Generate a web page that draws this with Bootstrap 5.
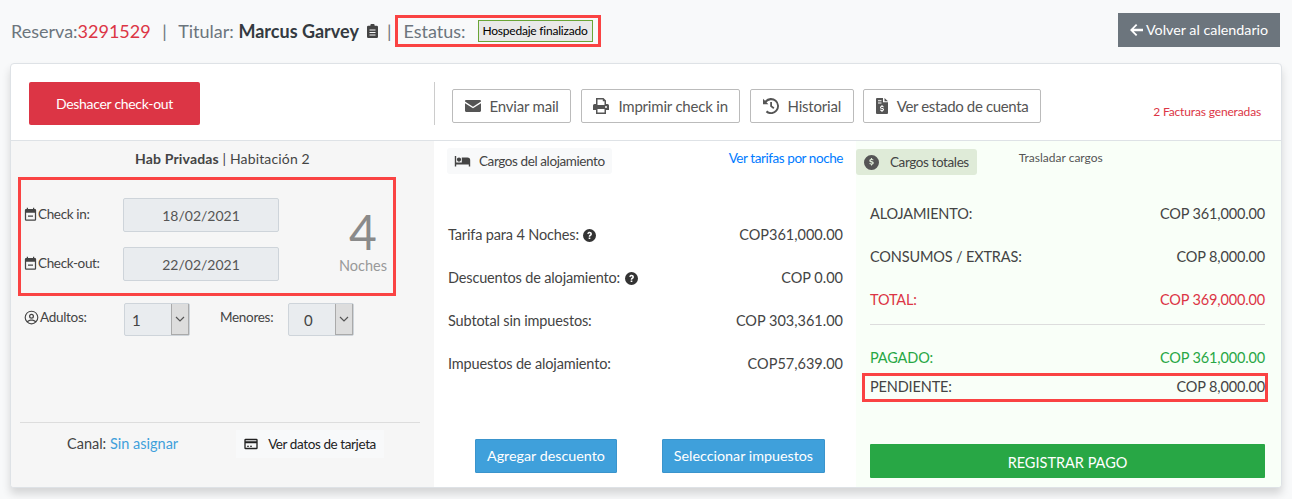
<!DOCTYPE html>
<html lang="es">
<head>
<meta charset="utf-8">
<title>Reserva</title>
<link href="https://cdn.jsdelivr.net/npm/bootstrap@5.3.0/dist/css/bootstrap.min.css" rel="stylesheet">
<style>
html,body{height:499px;overflow:hidden}
body{background:#f8f9fa;font-family:Lato,"Liberation Sans",sans-serif;font-size:14px;color:#444;padding:0 10px}
svg{fill:currentColor;flex:none}
.top-bar{height:63px;padding-top:13px}
.resumen{font-size:18px;color:#6c757d;height:36px;line-height:36px;white-space:nowrap;margin-left:1px}
.resumen b{color:#343a40;font-weight:700}
.rojo{color:#dc3545}
.sep{margin:0 11.5px;color:#6c757d}
.sep-b{margin:0 7px 0 9px;color:#6c757d}
.icono-clip{color:#444}
.caja-marca{border:3px solid #fa4343}
.caja-estatus{padding:0 5px;height:32px;display:flex;align-items:center;gap:12px;line-height:1;margin-top:-1px;margin-left:-3px}
.etiqueta-estado{background:#e9e9e9;border:1px solid #6aa536;color:#000;font-size:12px;padding:3px 4px;line-height:14px;height:22px;letter-spacing:-.22px}
.btn-volver{background:#6c757d;color:#fff;border-radius:0;font-size:14.3px;padding:0 11px;height:34px;width:162px;border:0;line-height:34px;white-space:nowrap;margin-right:2px}
.btn-volver:hover{background:#6c757d;color:#fff}
.btn-volver svg{vertical-align:-1px}
.ficha{width:1272px;height:425px;border:1px solid #dee2e6;border-radius:4px;background:#fff;box-shadow:0 6px 8px rgba(0,0,0,.14);overflow:hidden}
.cabecera{height:77px;border-bottom:1px solid #dee2e6;padding:18px 0 0 18px}
.btn-deshacer{background:#dc3545;color:#fff;width:171px;height:43px;font-size:14px;letter-spacing:-.3px;border-radius:2px;border:0;margin-right:234px;padding:0}
.btn-deshacer:hover{background:#dc3545;color:#fff}
.vline{width:1px;height:43px;background:#ccc;margin-right:17px}
.acciones{margin-top:7px;gap:9.7px}
.btn-accion{background:#fff;border:1px solid #bbb;border-radius:2px;color:#555;font-size:15px;letter-spacing:-.2px;height:34px;padding:0 11.5px;display:flex;align-items:center;gap:9px;white-space:nowrap}
.btn-accion.ajustado{letter-spacing:-.35px}
.facturas{color:#dc3545;font-size:12px;letter-spacing:-.15px;margin:21px 0 0 auto;padding-right:20px}
.cuerpo{height:346px}
.col-izq{width:423px;background:#f6f6f6;padding:9px 14px 0 7px;display:flex;flex-direction:column}
.col-med{width:422px;padding:7px 13px 0 14px;display:flex;flex-direction:column}
.col-der{width:425px;background:#f9fff8;padding:8px 16px 0 14px;display:flex;flex-direction:column}
.titulo-hab{text-align:center;font-size:14px;line-height:17px;margin-left:7px;letter-spacing:.15px}
.caja-fechas{width:378px;height:119px;padding:18px 0 0 2px;margin-top:10px;position:relative}
.fila-fecha{display:flex;align-items:center;height:34px;margin-bottom:15px;font-size:13.5px;letter-spacing:-.35px;color:#444}
.fila-fecha .lbl{width:100px;display:flex;align-items:center;margin-top:-1px}
.campo{width:156px;height:34px;background:#e9ecef;border:1px solid #ced4da;color:#555;display:flex;align-items:center;justify-content:center;border-radius:2px;font-size:14px;letter-spacing:0}
.noches{position:absolute;right:5px;top:27px;text-align:center;color:#8a8a8a;width:50px}
.noches .num{font-size:48px;line-height:49px}
.noches .txt{font-size:14.5px;line-height:20px;color:#999}
.fila-sel{display:flex;align-items:center;margin-top:7px;padding-left:6px;height:33px;font-size:13.5px;letter-spacing:-.3px}
.fila-sel .lbl{width:100px;display:flex;align-items:center;gap:1px;margin-top:-5px}
.lbl-menores{margin-left:30px;width:68px;margin-top:-5px}
.sel{width:66px;height:33px;background:#e9ecef;border:1px solid #ced4da;border-radius:2px;display:flex;font-size:15px;letter-spacing:0;color:#444}
.sel .v{flex:1;padding-top:5px;padding-left:7px}
.sel .v.v2{padding-left:15px}
.sel .f{width:18px;background:#ddd;border-left:1px solid #aaa;border-right:1px solid #aaa;border-bottom:1px solid #aaa;display:flex;align-items:center;justify-content:center;color:#555}
.linea{border-top:1px solid #ddd;margin:86px 0 0 2px;height:1px;width:400px}
.pie-izq{display:flex;align-items:center;margin-top:7px;padding-left:49px;font-size:14.5px}
.azul{color:#3fa0db;text-decoration:none}
.ver-tarjeta{background:#f8f9fa;padding:0 8px 0 7px;height:28px;display:flex;align-items:center;gap:9px;color:#222;margin-left:58px;font-size:13.5px;letter-spacing:-.4px;white-space:nowrap}
.chip{display:inline-flex;align-items:center;height:26px;border-radius:3px;padding:0 7px;font-size:13.5px;letter-spacing:-.4px;white-space:nowrap}
.chip-gris{background:#f8f9fa;color:#444;gap:8px;margin-left:-1px}
.chip-verde{background:#dfebd8;color:#444;gap:11px;margin-left:-14px;padding:0 8px 0 8px}
.chip-verde svg{color:#555}
.enlace-tarifas{color:#007bff;text-decoration:none;font-size:13.5px;letter-spacing:-.43px}
.trasladar{font-size:12px;color:#555;margin-left:42px}
.fila-monto{display:flex;justify-content:space-between;align-items:center;font-size:14.5px;color:#444;height:20px}
.col-med .fila-monto span:first-child{letter-spacing:-.15px}
.col-der .fila-monto{letter-spacing:-.15px}
.fila-monto.rojo{color:#dc3545}
.fila-monto.verde{color:#28a745}
.ayuda{display:inline-block;vertical-align:-2px;margin-left:1px;color:#333}
.bloque-med{margin-top:51px;display:flex;flex-direction:column;gap:23px}
.bloque-der{margin-top:29px;display:flex;flex-direction:column;gap:23px}
.sep-der{border-top:1px solid #ddd;height:1px;margin:14px 0 23px}
.caja-pend{margin:5px -3px 0 -8px;padding:0 0 1px 5px;height:29px}
.botones-med{margin-top:auto;padding-bottom:14px;display:flex;gap:45px;padding-left:27px}
.btn-azul{background:#3fa0db;border:1px solid #3a94cc;color:#fff;font-size:14.3px;border-radius:1px;height:34px;padding:0 11px;white-space:nowrap}
.btn-azul:hover{background:#3fa0db;color:#fff}
.btn-pago{background:#28a745;color:#fff;border:0;border-radius:1px;height:34px;width:395px;font-size:14.5px;margin-top:auto;margin-bottom:9px;padding:3px 0 0}
.btn-pago:hover{background:#28a745;color:#fff}
</style>
</head>
<body>
<div class="top-bar d-flex justify-content-between align-items-start">
  <div class="resumen d-flex align-items-center">
    <span>Reserva:<span class="rojo">3291529</span></span><span class="sep">|</span>
    <span>Titular: <b>Marcus Garvey</b></span>
    <svg class="ms-2 icono-clip" width="11" height="14" viewBox="0 0 11 14"><path d="M1.2 1.8H3.4V1A1 1 0 0 1 4.4 0h2.2a1 1 0 0 1 1 1v.8h2.2a1.2 1.2 0 0 1 1.2 1.2v9.800a1.2 1.2 0 0 1-1.200 1.200H1.200A1.200 1.200 0 0 1 0 12.800V3a1.200 1.200 0 0 1 1.200-1.200zM2.500 5.500v1h6v-1zm0 2.500v1h6V8zm0 2.500v1h6v-1z" fill-rule="evenodd"/></svg>
    <span class="sep-b">|</span>
    <div class="caja-marca caja-estatus"><span>Estatus:</span><span class="etiqueta-estado">Hospedaje finalizado</span></div>
  </div>
  <a class="btn btn-volver" href="#"><svg width="13" height="12" viewBox="0 0 13 12"><path d="M6 0l1.300 1.300L3.700 4.800H13v2.400H3.700l3.600 3.500L6 12 0 6z"/></svg> Volver al calendario</a>
</div>
<div class="ficha">
  <div class="cabecera d-flex align-items-start">
    <button class="btn btn-deshacer">Deshacer check-out</button>
    <div class="vline"></div>
    <div class="acciones d-flex">
      <button class="btn btn-accion"><svg width="16" height="12" viewBox="0 0 16 12"><path d="M1.200 0h13.600c.6 0 1.200.5 1.200 1.200v.4L8 6.700 0 1.600v-.4C0 .5.500 0 1.200 0zM0 3.200l8 5.100 8-5.100v7.600c0 .7-.6 1.200-1.200 1.200H1.200C.5 12 0 11.500 0 10.800z"/></svg>Enviar mail</button>
      <button class="btn btn-accion"><svg width="16" height="16" viewBox="0 0 16 16"><path fill-rule="evenodd" d="M3 0h7.500L13 2.500V6h1.500A1.500 1.500 0 0 1 16 7.500V12h-3v4H3v-4H0V7.500A1.500 1.500 0 0 1 1.500 6H3zm1.500 1.500V7h7V3.200H9.800V1.500zm0 9.500v3.500h7V11zM13 8a1 1 0 1 0 0 2 1 1 0 0 0 0-2z"/></svg>Imprimir check in</button>
      <button class="btn btn-accion"><svg width="16" height="16" viewBox="0 0 16 16"><path d="M0 .8v5.400h5.400L3.500 4.300A6 6 0 1 1 4.100 12.600l-1.300 1.600A8 8 0 1 0 2 2.800z"/><path d="M7.200 4h1.800v3.700l2.400 1.800-1.100 1.400-3.100-2.400z"/></svg>Historial</button>
      <button class="btn btn-accion ajustado"><svg width="12" height="16" viewBox="0 0 12 16"><path fill-rule="evenodd" d="M1 0h6v4.200h5V15a1 1 0 0 1-1 1H1a1 1 0 0 1-1-1V1a1 1 0 0 1 1-1zm7.500 0L12 3.200H8.500zM2 2.200v1h3.500v-1zm0 2.200v1h3.500v-1zM5.500 7v1c-1 .2-1.500.8-1.500 1.500 0 1.700 3 1.200 3 2 0 .6-1.700.5-2.700-.1l-.3 1c.4.300 1 .4 1.500.5v1h1v-1c1-.2 1.500-.8 1.500-1.500 0-1.800-3-1.200-3-2 0-.5 1.400-.5 2.400 0l.4-1c-.4-.2-.8-.3-1.300-.4V7z"/></svg>Ver estado de cuenta</button>
    </div>
    <span class="facturas">2 Facturas generadas</span>
  </div>
  <div class="cuerpo d-flex">
    <section class="col-izq">
      <div class="titulo-hab"><b>Hab Privadas</b> | Habitación 2</div>
      <div class="caja-marca caja-fechas">
        <div class="fila-fecha"><span class="lbl"><svg width="15" height="15" viewBox="0 0 24 24"><path fill-rule="evenodd" d="M19 3h-1V1h-2v2H8V1H6v2H5a2 2 0 0 0-2 2v15a2 2 0 0 0 2 2h14a2 2 0 0 0 2-2V5a2 2 0 0 0-2-2zm0 17H5V9h14zM8 13.500h8v2H8z"/></svg>Check in:</span><span class="campo">18/02/2021</span></div>
        <div class="fila-fecha"><span class="lbl"><svg width="15" height="15" viewBox="0 0 24 24"><path fill-rule="evenodd" d="M19 3h-1V1h-2v2H8V1H6v2H5a2 2 0 0 0-2 2v15a2 2 0 0 0 2 2h14a2 2 0 0 0 2-2V5a2 2 0 0 0-2-2zm0 17H5V9h14zM8 13.500h8v2H8z"/></svg>Check-out:</span><span class="campo">22/02/2021</span></div>
        <div class="noches"><div class="num">4</div><div class="txt">Noches</div></div>
      </div>
      <div class="fila-sel">
        <span class="lbl"><svg width="15" height="15" viewBox="0 0 24 24"><path fill-rule="evenodd" d="M12 1a11 11 0 1 0 0 22 11 11 0 0 0 0-22zm0 2a9 9 0 0 1 7 14.700C17.500 15.900 14.800 15 12 15s-5.500.9-7 2.700A9 9 0 0 1 12 3zm0 3a4 4 0 1 0 0 8 4 4 0 0 0 0-8zm0 2a2 2 0 1 1 0 4 2 2 0 0 1 0-4zm0 9c2 0 4 .6 5.500 2.100A9 9 0 0 1 6.500 19.100C8 17.600 10 17 12 17z"/></svg>Adultos:</span>
        <div class="sel"><span class="v">1</span><span class="f"><svg width="10" height="6" viewBox="0 0 10 6"><path d="M1 1l4 4 4-4" fill="none" stroke="currentColor" stroke-width="1.200"/></svg></span></div>
        <span class="lbl-menores">Menores:</span>
        <div class="sel"><span class="v v2">0</span><span class="f"><svg width="10" height="6" viewBox="0 0 10 6"><path d="M1 1l4 4 4-4" fill="none" stroke="currentColor" stroke-width="1.200"/></svg></span></div>
      </div>
      <div class="linea"></div>
      <div class="pie-izq">
        <span>Canal: <a class="azul" href="#">Sin asignar</a></span>
        <span class="ver-tarjeta"><svg width="16" height="16" viewBox="0 0 24 24"><path fill-rule="evenodd" d="M20 4H4a2 2 0 0 0-2 2v12a2 2 0 0 0 2 2h16a2 2 0 0 0 2-2V6a2 2 0 0 0-2-2zM4 8V6.500h16V8zm0 3h16v6.500H4zm2 3.500v1.500h3v-1.500zm4.500 0v1.500h3v-1.500z"/></svg>Ver datos de tarjeta</span>
      </div>
    </section>
    <section class="col-med">
      <div class="d-flex justify-content-between align-items-start">
        <span class="chip chip-gris"><svg width="17" height="14" viewBox="0 0 24 20"><path d="M7 11c1.700 0 3-1.300 3-3S8.700 5 7 5 4 6.300 4 8s1.300 3 3 3zm12-6h-8v7H3V3H1v15h2v-3h18v3h2V9a4 4 0 0 0-4-4z"/></svg>Cargos del alojamiento</span>
        <a class="enlace-tarifas" href="#">Ver tarifas por noche</a>
      </div>
      <div class="bloque-med">
        <div class="fila-monto"><span>Tarifa para 4 Noches: <svg class="ayuda" width="13" height="13" viewBox="0 0 14 14"><path fill-rule="evenodd" d="M7 0a7 7 0 1 0 0 14A7 7 0 0 0 7 0zm.9 10.800H6.100V9.200h1.800zm.3-3.300c-.3.200-.4.300-.4.800H6.200c0-1.200.4-1.600 1-2 .4-.3.700-.5.700-.9 0-.5-.4-.8-.9-.8-.6 0-1 .4-1.200 1L4.500 4.900C5 3.700 5.900 3 7.100 3c1.400 0 2.500.9 2.500 2.300 0 1.100-.7 1.600-1.400 2.200z"/></svg></span><span>COP361,000.00</span></div>
        <div class="fila-monto"><span>Descuentos de alojamiento: <svg class="ayuda" width="13" height="13" viewBox="0 0 14 14"><path fill-rule="evenodd" d="M7 0a7 7 0 1 0 0 14A7 7 0 0 0 7 0zm.9 10.800H6.100V9.200h1.800zm.3-3.300c-.3.200-.4.300-.4.800H6.200c0-1.200.4-1.600 1-2 .4-.3.700-.5.700-.9 0-.5-.4-.8-.9-.8-.6 0-1 .4-1.200 1L4.500 4.900C5 3.700 5.900 3 7.100 3c1.400 0 2.500.9 2.500 2.300 0 1.100-.7 1.600-1.400 2.200z"/></svg></span><span>COP 0.00</span></div>
        <div class="fila-monto"><span>Subtotal sin impuestos:</span><span>COP 303,361.00</span></div>
        <div class="fila-monto"><span>Impuestos de alojamiento:</span><span>COP57,639.00</span></div>
      </div>
      <div class="botones-med">
        <button class="btn btn-azul">Agregar descuento</button>
        <button class="btn btn-azul">Seleccionar impuestos</button>
      </div>
    </section>
    <section class="col-der">
      <div class="d-flex align-items-start">
        <span class="chip chip-verde"><svg width="15" height="15" viewBox="0 0 16 16"><path fill-rule="evenodd" d="M8 0a8 8 0 1 0 0 16A8 8 0 0 0 8 0zm.6 3.300v1c.6.1 1.100.3 1.500.5l-.4 1.100c-.9-.5-2.500-.7-2.500 0 0 .9 3.200.4 3.200 2.500 0 .9-.7 1.500-1.800 1.700v1.100H7.500v-1c-.7-.1-1.300-.3-1.800-.6l.4-1.100c1 .6 2.800.8 2.800 0 0-.9-3.200-.4-3.200-2.500 0-.9.600-1.500 1.700-1.700v-1z"/></svg>Cargos totales</span>
        <span class="trasladar">Trasladar cargos</span>
      </div>
      <div class="bloque-der">
        <div class="fila-monto"><span>ALOJAMIENTO:</span><span>COP 361,000.00</span></div>
        <div class="fila-monto"><span>CONSUMOS / EXTRAS:</span><span>COP 8,000.00</span></div>
        <div class="fila-monto rojo"><span>TOTAL:</span><span>COP 369,000.00</span></div>
      </div>
      <div class="sep-der"></div>
      <div class="fila-monto verde"><span>PAGADO:</span><span>COP 361,000.00</span></div>
      <div class="fila-monto caja-marca caja-pend"><span>PENDIENTE:</span><span>COP 8,000.00</span></div>
      <button class="btn btn-pago">REGISTRAR PAGO</button>
    </section>
  </div>
</div>
</body>
</html>
